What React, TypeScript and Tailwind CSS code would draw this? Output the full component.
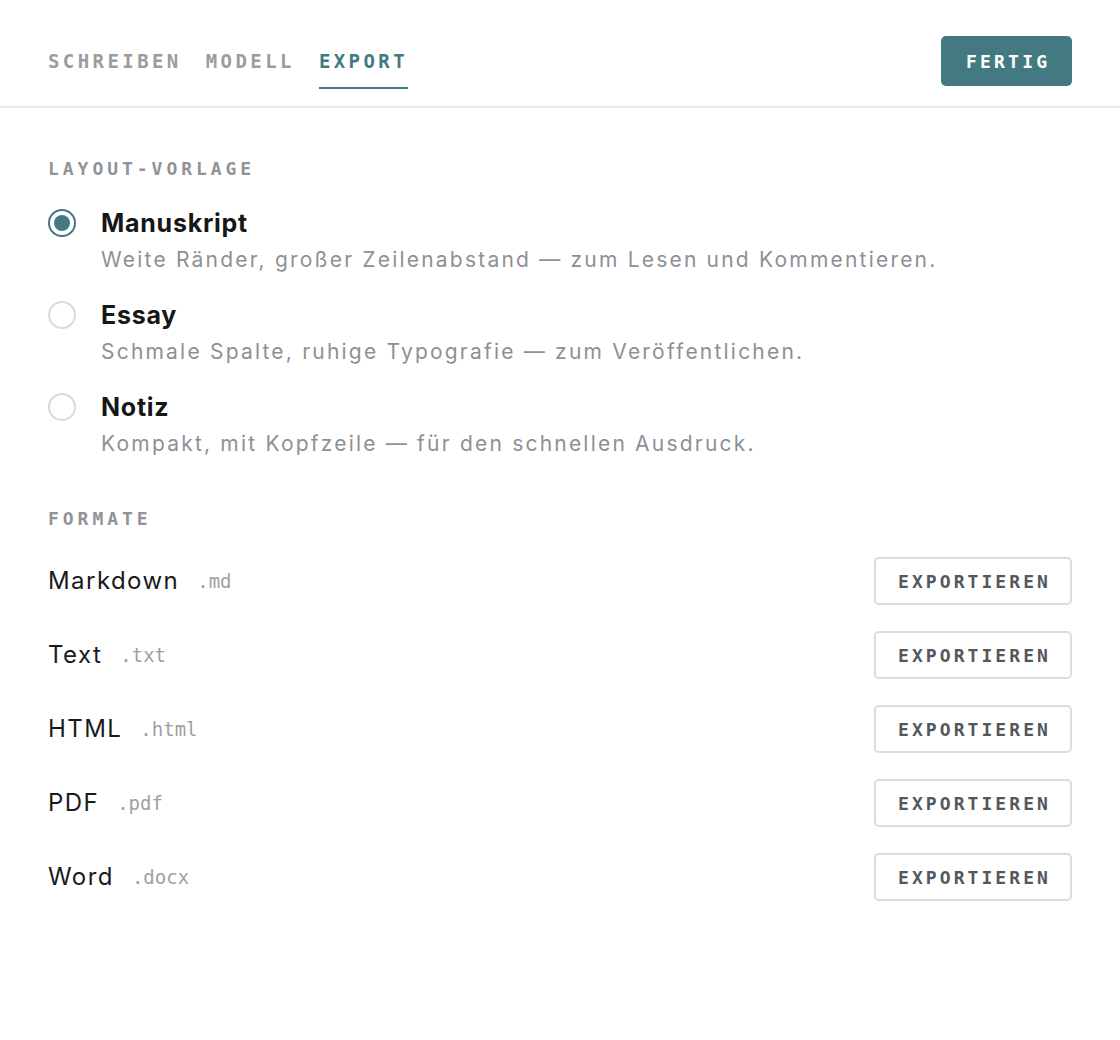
const mono = "font-['DejaVu_Sans_Mono','Liberation_Mono',monospace]";
const sans = "font-['Inter','Noto_Sans',sans-serif]";

const tabs = [
  { id: "write", label: "SCHREIBEN" },
  { id: "model", label: "MODELL" },
  { id: "export", label: "EXPORT" },
];

const templates = [
  {
    id: "manuscript",
    title: "Manuskript",
    description: "Weite Ränder, großer Zeilenabstand — zum Lesen und Kommentieren.",
  },
  {
    id: "essay",
    title: "Essay",
    description: "Schmale Spalte, ruhige Typografie — zum Veröffentlichen.",
  },
  {
    id: "note",
    title: "Notiz",
    description: "Kompakt, mit Kopfzeile — für den schnellen Ausdruck.",
  },
];

const formats = [
  { name: "Markdown", ext: ".md" },
  { name: "Text", ext: ".txt" },
  { name: "HTML", ext: ".html" },
  { name: "PDF", ext: ".pdf" },
  { name: "Word", ext: ".docx" },
];

function SectionLabel({ children }: { children: string }) {
  return (
    <h2
      className={`${mono} text-[18px] leading-6 font-bold tracking-[0.22em] text-[#909398]`}
    >
      {children}
    </h2>
  );
}

function Radio({ checked }: { checked: boolean }) {
  return checked ? (
    <span className="mt-[2px] flex h-7 w-7 shrink-0 items-center justify-center rounded-full border-2 border-[#437a81]">
      <span className="h-4 w-4 rounded-full bg-[#437a81]" />
    </span>
  ) : (
    <span className="mt-[2px] h-7 w-7 shrink-0 rounded-full border-2 border-[#dadada]" />
  );
}

export default function App() {
  const activeTab = "export";
  const selected = "manuscript";

  return (
    <div className={`min-h-[1040px] w-[1120px] bg-white ${sans}`}>
      {/* Top bar */}
      <header className="flex h-[108px] items-start justify-between border-b-2 border-[#ebebeb] px-12">
        <nav className="mt-[49px] flex gap-[24px]">
          {tabs.map((tab) => {
            const active = tab.id === activeTab;
            return (
              <button
                key={tab.id}
                className={`${mono} border-b-2 pb-[14px] text-[19px] leading-6 font-bold tracking-[0.18em] ${
                  active
                    ? "border-[#437a81] text-[#437a81]"
                    : "border-transparent text-[#9a9ca1]"
                }`}
              >
                {tab.label}
              </button>
            );
          })}
        </nav>
        <button
          className={`${mono} mt-9 flex h-[50px] w-[131px] items-center justify-center rounded-[5px] bg-[#437a81] pl-[0.18em] text-[18px] font-bold tracking-[0.18em] text-white`}
        >
          FERTIG
        </button>
      </header>

      <main className="px-12 pt-[49px]">
        {/* Layout templates */}
        <section>
          <SectionLabel>LAYOUT-VORLAGE</SectionLabel>
          <div className="mt-[26px] flex flex-col gap-[25px]">
            {templates.map((t) => (
              <label key={t.id} className="flex cursor-pointer items-start gap-[25px]">
                <Radio checked={t.id === selected} />
                <div>
                  <div className="text-[25px] leading-8 font-bold tracking-[0.03em] text-[#161616]">
                    {t.title}
                  </div>
                  <p className="mt-[7px] text-[21px] leading-7 tracking-[0.105em] text-[#8d9095]">
                    {t.description}
                  </p>
                </div>
              </label>
            ))}
          </div>
        </section>

        {/* Export formats */}
        <section className="mt-[49px]">
          <SectionLabel>FORMATE</SectionLabel>
          <div className="mt-[26px] flex flex-col gap-[26px]">
            {formats.map((f) => (
              <div key={f.name} className="flex h-12 items-center justify-between">
                <div className="flex items-center gap-[18px]">
                  <span className="text-[24px] leading-8 tracking-[0.06em] text-[#1a1a1a]">
                    {f.name}
                  </span>
                  <span className={`${mono} text-[19px] leading-6 text-[#9da0a5]`}>
                    {f.ext}
                  </span>
                </div>
                <button
                  className={`${mono} flex h-12 w-[198px] items-center justify-center rounded-[5px] border-2 border-[#dcdcdc] pl-[0.17em] text-[18px] font-bold tracking-[0.17em] text-[#54575c]`}
                >
                  EXPORTIEREN
                </button>
              </div>
            ))}
          </div>
        </section>
      </main>
    </div>
  );
}
